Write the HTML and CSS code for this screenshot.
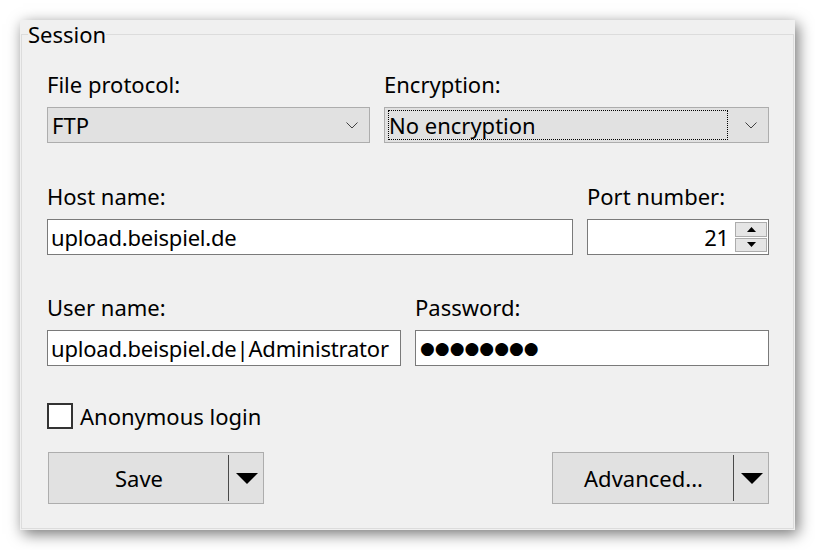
FILE: index.html
```html
<!DOCTYPE html>
<html lang="en">
<head>
<meta charset="utf-8">
<title>Session</title>
<link rel="stylesheet" href="styles.css">
</head>
<body>
<div class="window">
  <fieldset class="group">
    <legend class="group-title">Session</legend>
    <div class="group-body">

      <div class="row row-protocol">
        <div class="field">
          <span class="label">File protocol:</span>
          <div class="combo">
            <span class="combo-text">FTP</span>
            <svg class="chevron" width="12" height="7" viewBox="0 0 12 7"><polyline points="0.5,0.5 6,6 11.5,0.5" fill="none" stroke="#404040" stroke-width="1"/></svg>
          </div>
        </div>
        <div class="field">
          <span class="label">Encryption:</span>
          <div class="combo">
            <span class="combo-text focused">No encryption</span>
            <svg class="chevron" width="12" height="7" viewBox="0 0 12 7"><polyline points="0.5,0.5 6,6 11.5,0.5" fill="none" stroke="#404040" stroke-width="1"/></svg>
          </div>
        </div>
      </div>

      <div class="row row-host">
        <div class="field">
          <span class="label">Host name:</span>
          <div class="edit">upload.beispiel.de</div>
        </div>
        <div class="field">
          <span class="label">Port number:</span>
          <div class="edit spin">
            <span class="spin-value">21</span>
            <div class="spin-buttons">
              <div class="spin-btn"><svg width="9" height="5" viewBox="0 0 9 5"><polygon points="4.5,0 9,5 0,5" fill="#000"/></svg></div>
              <div class="spin-btn"><svg width="9" height="5" viewBox="0 0 9 5"><polygon points="0,0 9,0 4.5,5" fill="#000"/></svg></div>
            </div>
          </div>
        </div>
      </div>

      <div class="row row-user">
        <div class="field">
          <span class="label">User name:</span>
          <div class="edit">upload.beispiel.de|Administrator</div>
        </div>
        <div class="field">
          <span class="label">Password:</span>
          <div class="edit password">●●●●●●●●</div>
        </div>
      </div>

      <label class="check">
        <span class="check-box"></span>
        <span class="check-text">Anonymous login</span>
      </label>

      <div class="buttons">
        <div class="split-btn">
          <span class="split-main">Save</span>
          <span class="split-arrow"><svg width="22" height="11" viewBox="0 0 22 11"><polygon points="0,0 22,0 11,11" fill="#000"/></svg></span>
        </div>
        <div class="split-btn split-wide">
          <span class="split-main">Advanced...</span>
          <span class="split-arrow"><svg width="22" height="11" viewBox="0 0 22 11"><polygon points="0,0 22,0 11,11" fill="#000"/></svg></span>
        </div>
      </div>

    </div>
  </fieldset>
</div>
</body>
</html>
```

FILE: styles.css
```css
* {
  box-sizing: border-box;
}

html, body {
  margin: 0;
  background: #ffffff;
}

body {
  padding: 20px;
  font-family: "Noto Sans", "Open Sans", sans-serif;
  font-size: 22px;
  color: #000;
}

/* dialog surface with the soft window shadow */
.window {
  width: 775px;
  height: 510px;
  background: #f0f0f0;
  padding: 0 1px 1px 1px;
  box-shadow: 3px 4px 14px rgba(0, 0, 0, 0.55);
  display: flex;
}

.group {
  flex: 1;
  margin: 0;
  padding: 0;
  border: 1px solid #dcdcdc;
  min-width: 0;
}

.group-title {
  margin-left: 6px;
  padding: 0;
  line-height: 28px;
  height: 28px;
}

.group-body {
  padding: 23px 24px 0 25px;
}

.row {
  display: grid;
  column-gap: 14px;
}

.row-protocol { grid-template-columns: 323px 1fr; }
.row-host { grid-template-columns: 1fr 182px; margin-top: 40px; }
.row-user { grid-template-columns: 1fr 1fr; margin-top: 39px; }

.field {
  display: flex;
  flex-direction: column;
}

.label {
  line-height: 26px;
  height: 28px;
  margin-bottom: 8px;
  white-space: nowrap;
}

/* drop-down list */
.combo {
  height: 36px;
  border: 1px solid #adadad;
  background: #e1e1e1;
  display: flex;
  align-items: center;
  padding: 2px 11px 2px 3px;
}

.combo-text {
  flex: 1;
  align-self: stretch;
  display: flex;
  align-items: center;
  padding-left: 1px;
  margin-right: 17px;
  white-space: nowrap;
}

.combo-text.focused {
  outline: 1px dotted #000;
  outline-offset: -1px;
}

.chevron {
  display: block;
}

/* single-line edit */
.edit {
  height: 36px;
  border: 1px solid #7a7a7a;
  background: #fff;
  padding: 0 3px;
  display: flex;
  align-items: center;
  white-space: nowrap;
  overflow: hidden;
  letter-spacing: -0.2px;
}

.password {
  font-family: "DejaVu Sans", sans-serif;
  font-size: 17px;
  letter-spacing: 0;
  padding-left: 4px;
}

.spin {
  padding: 2px 1px 2px 3px;
}

.spin-value {
  flex: 1;
  text-align: right;
  padding-right: 6px;
}

.spin-buttons {
  display: flex;
  flex-direction: column;
  align-self: stretch;
  width: 32px;
}

.spin-btn {
  flex: 1;
  border: 1px solid #acacac;
  background: #e5e5e5;
  display: flex;
  align-items: center;
  justify-content: center;
}

.spin-btn + .spin-btn {
  margin-top: 1px;
}

.spin-btn svg {
  display: block;
}

/* check box */
.check {
  display: flex;
  align-items: center;
  margin-top: 37px;
  height: 26px;
}

.check-box {
  width: 26px;
  height: 26px;
  border: 2px solid #333;
  background: #fff;
  margin-right: 7px;
}

.check-text {
  line-height: 26px;
}

/* split push buttons */
.buttons {
  display: flex;
  justify-content: space-between;
  margin-top: 23px;
  padding-left: 1px;
}

.split-btn {
  width: 216px;
  height: 52px;
  border: 1px solid #adadad;
  background: #e1e1e1;
  display: flex;
  align-items: stretch;
}

.split-wide {
  width: 217px;
}

.split-main {
  flex: 1;
  display: flex;
  align-items: center;
  justify-content: center;
  padding-left: 1px;
}

.split-arrow {
  width: 35px;
  margin: 2px 0;
  border-left: 1px solid #4a4a4a;
  display: flex;
  align-items: center;
  justify-content: center;
  padding-left: 1px;
}

.split-arrow svg {
  display: block;
}
```
